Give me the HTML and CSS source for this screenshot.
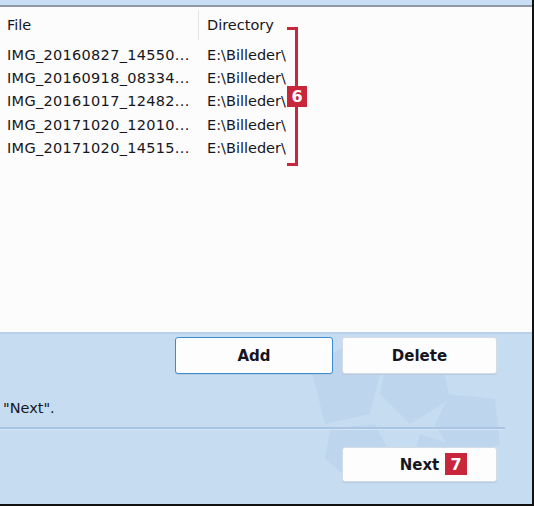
FILE: index.html
```html
<!DOCTYPE html>
<html>
<head>
<meta charset="utf-8">
<link rel="stylesheet" href="styles.css">
</head>
<body>
<div class="window">
  <div class="topband"></div>
  <div class="list">
    <div class="list-head">
      <div class="col-file">File</div>
      <div class="col-dir head-dir">Directory</div>
    </div>
    <div class="rows">
      <div class="row"><div class="col-file name">IMG_20160827_14550...</div><div class="col-dir">E:\Billeder\</div></div>
      <div class="row"><div class="col-file name">IMG_20160918_08334...</div><div class="col-dir">E:\Billeder\</div></div>
      <div class="row"><div class="col-file name">IMG_20161017_12482...</div><div class="col-dir">E:\Billeder\</div></div>
      <div class="row"><div class="col-file name">IMG_20171020_12010...</div><div class="col-dir">E:\Billeder\</div></div>
      <div class="row"><div class="col-file name">IMG_20171020_14515...</div><div class="col-dir">E:\Billeder\</div></div>
    </div>
    <div class="bracket"></div>
    <div class="badge badge-6">6</div>
  </div>
  <div class="bottom">
    <svg class="watermark" width="260" height="150" viewBox="0 0 260 150">
      <g fill="#a9c6e6" opacity="0.28">
        <path d="M40 30 l40 -20 l30 30 l-10 40 l-45 10 z"/>
        <path d="M120 10 l50 10 l10 45 l-40 25 l-30 -30 z"/>
        <path d="M60 95 l45 -5 l20 40 l-40 20 l-30 -25 z"/>
        <path d="M180 60 l45 5 l5 45 l-45 15 l-20 -35 z"/>
        <path d="M150 100 l30 10 l-5 35 l-35 -5 z"/>
      </g>
    </svg>
    <div class="btn-row">
      <button class="btn btn-focus">Add</button>
      <button class="btn">Delete</button>
    </div>
    <div class="hint">"Next".</div>
    <div class="sep"></div>
    <div class="btn-row next-row">
      <button class="btn next-btn">Next<span class="badge badge-7">7</span></button>
    </div>
  </div>
</div>
</body>
</html>
```
FILE: styles.css
```css
html, body {
  margin: 0;
  padding: 0;
  background: #c6dcf1;
}
.window {
  width: 534px;
  height: 506px;
  box-sizing: border-box;
  border-right: 2px solid #111;
  border-bottom: 2px solid #111;
  display: flex;
  flex-direction: column;
  font-family: "DejaVu Sans", sans-serif;
  font-size: 14.5px;
  color: #161622;
  overflow: hidden;
}
.topband {
  height: 5px;
  background: #c9ddf4;
  border-bottom: 2px solid #8e99a8;
  flex: none;
}
.list {
  position: relative;
  height: 325px;
  flex: none;
  background: #fcfcfc;
}
.list-head {
  display: flex;
  height: 37px;
  box-sizing: border-box;
  padding-top: 9px;
  line-height: 18px;
}
.col-file {
  width: 191px;
  padding-left: 7px;
  white-space: nowrap;
  overflow: visible;
}
.name {
  letter-spacing: 0.3px;
}
.col-dir {
  padding-left: 9px;
  white-space: nowrap;
}
.head-dir {
  border-left: 1px solid #e2e4e8;
  margin-top: -6px;
  padding-top: 6px;
  height: 30px;
  box-sizing: border-box;
  padding-left: 8px;
}
.rows {
  display: flex;
  flex-direction: column;
}
.row {
  display: flex;
  height: 23.2px;
  line-height: 23px;
}
.bracket {
  position: absolute;
  left: 287px;
  top: 20px;
  width: 8px;
  height: 133px;
  border: 3px solid #c8263a;
  border-left: none;
}
.badge {
  background: #c8263a;
  color: #fff;
  font-weight: bold;
  font-family: "DejaVu Sans", sans-serif;
  font-size: 16px;
  display: flex;
  align-items: center;
  justify-content: center;
}
.badge-6 {
  position: absolute;
  left: 287px;
  top: 79px;
  width: 20px;
  height: 21px;
}
.bottom {
  position: relative;
  flex: 1;
  background: #c6dcf1;
  border-top: 2px solid #b9d1ea;
  display: flex;
  flex-direction: column;
}
.watermark {
  position: absolute;
  left: 270px;
  top: 0;
}
.btn-row {
  position: relative;
  display: flex;
  justify-content: flex-end;
  gap: 9px;
  padding-right: 35px;
  padding-top: 3px;
}
.btn {
  position: relative;
  height: 37px;
  width: 155px;
  background: #fdfdfd;
  border: 1px solid #d3dbe4;
  border-radius: 3px;
  font-family: "DejaVu Sans", sans-serif;
  font-weight: bold;
  font-size: 15px;
  color: #15151f;
  padding: 0;
  box-shadow: 0 1px 0 #b7cbe0;
}
.btn-focus {
  width: 158px;
  border: 1px solid #3d8bd0;
}
.hint {
  position: relative;
  margin-top: 25px;
  padding-left: 3px;
  line-height: 18px;
  height: 18px;
}
.sep {
  position: relative;
  margin-top: 10px;
  width: 505px;
  height: 2px;
  background: #a9c5e3;
  border-bottom: 1px solid #d6e5f4;
}
.next-row {
  padding-top: 17px;
}
.next-btn {
  height: 35px;
}
.badge-7 {
  position: absolute;
  left: 102px;
  top: 5px;
  width: 22px;
  height: 22px;
}
```
